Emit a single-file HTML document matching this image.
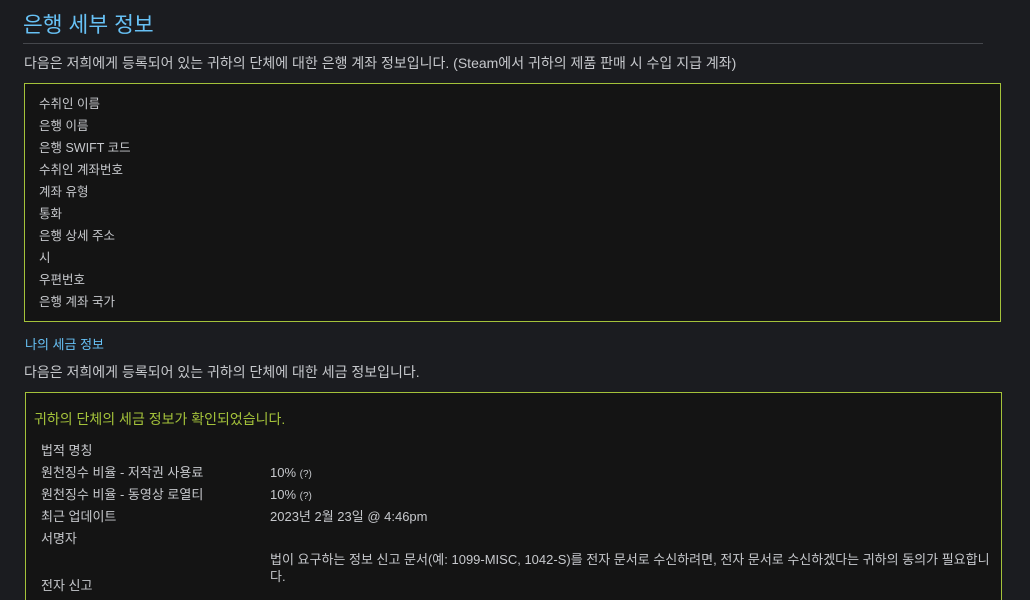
<!DOCTYPE html>
<html style="overflow:hidden"><head><meta charset="utf-8"><style>
html,body{margin:0;overflow:hidden;}
body{background:#1b1c20;width:1030px;height:600px;font-family:"Liberation Sans","Noto Sans CJK KR",sans-serif;color:#c6c8cc;position:relative;}
.abs{position:absolute;white-space:nowrap;}
h1{position:absolute;left:23px;top:9px;margin:0;font-weight:normal;font-size:21.5px;color:#67c1f5;line-height:32px;}
.hr{position:absolute;left:23px;top:43px;width:960px;height:1px;background:#45474c;}
.t14{font-size:14px;line-height:18px;}
.box{position:absolute;background:#141414;border:1px solid #a4c23a;}
.q{font-size:10px;line-height:10px;}
</style></head><body>
<h1>은행 세부 정보</h1>
<div class="hr"></div>
<div class="abs t14" style="left:24px;top:54px;">다음은 저희에게 등록되어 있는 귀하의 단체에 대한 은행 계좌 정보입니다. (Steam에서 귀하의 제품 판매 시 수입 지급 계좌)</div>
<div class="box" style="left:24px;top:83px;width:975px;height:237px;"></div>
<div class="abs" style="left:39px;top:93px;line-height:22px;font-size:12.5px;">수취인 이름<br>은행 이름<br>은행 SWIFT 코드<br>수취인 계좌번호<br>계좌 유형<br>통화<br>은행 상세 주소<br>시<br>우편번호<br>은행 계좌 국가</div>
<div class="abs" style="left:25px;top:337px;font-size:13px;line-height:16px;color:#67c1f5;">나의 세금 정보</div>
<div class="abs t14" style="left:24px;top:363px;">다음은 저희에게 등록되어 있는 귀하의 단체에 대한 세금 정보입니다.</div>
<div class="box" style="left:25px;top:392px;width:975px;height:220px;"></div>
<div class="abs" style="left:34px;top:410px;font-size:14px;line-height:18px;color:#a4c23a;">귀하의 단체의 세금 정보가 확인되었습니다.</div>
<div class="abs" style="left:41px;top:440px;font-size:13px;line-height:22px;">법적 명칭<br>원천징수 비율 - 저작권 사용료<br>원천징수 비율 - 동영상 로열티<br>최근 업데이트<br>서명자</div>
<div class="abs" style="left:270px;top:462px;font-size:13px;line-height:22px;">10% <span class="q">(?)</span><br>10% <span class="q">(?)</span><br>2023년 2월 23일 @ 4:46pm</div>
<div class="abs" style="left:270px;top:551px;font-size:13px;line-height:17px;">법이 요구하는 정보 신고 문서(예: 1099-MISC, 1042-S)를 전자 문서로 수신하려면, 전자 문서로 수신하겠다는 귀하의 동의가 필요합니<br>다.</div>
<div class="abs" style="left:41px;top:577px;font-size:13px;line-height:18px;">전자 신고</div>
</body></html>
